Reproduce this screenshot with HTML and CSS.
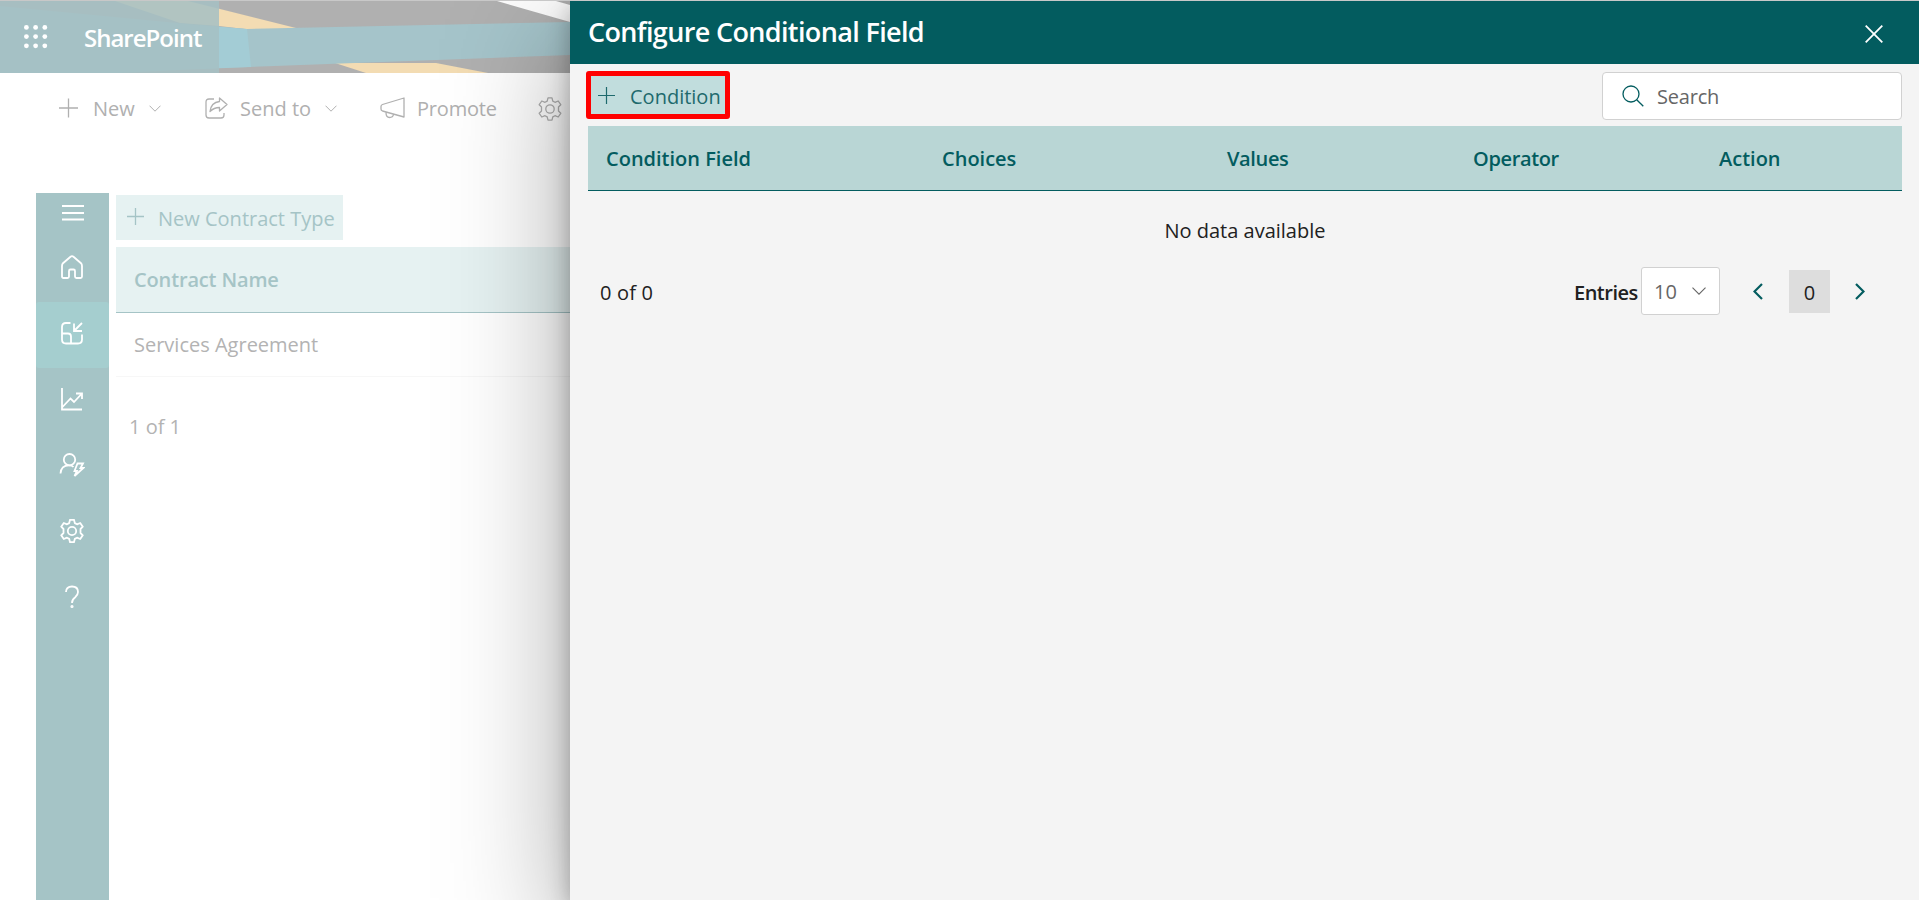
FILE: index.html
```
<!DOCTYPE html>
<html lang="en">
<head>
<meta charset="utf-8">
<title>Configure Conditional Field</title>
<link rel="stylesheet" href="styles.css">
</head>
<body>
<div class="page">
  <header class="suite">
    <svg class="suite-art" viewBox="0 0 570 72" preserveAspectRatio="none">
      <rect width="570" height="72" fill="#b0b0b0"/>
      <path d="M115 0H188L300 28H245L219 25L180 22Z" fill="#f3dcb3"/>
      <path d="M335 62H436L488 72H366Z" fill="#f3dcb3"/>
      <path d="M0 5L219 26L247 28L570 21V54L219 67L120 72H0Z" fill="#a5c4ca"/>
      <path d="M200 24L247 28L251 66L200 68Z" fill="#a3ccd5"/>
      <path d="M497 0H570V21Z" fill="#fdfdfd"/>
      <path d="M556 0H570V4Z" fill="#b0b0b0"/>
    </svg>
    <div class="brand">
      <svg class="waffle" width="24" height="24" viewBox="0 0 24 24" fill="#fff"><circle cx="2.400" cy="2.400" r="2.400"/><circle cx="11.600" cy="2.400" r="2.400"/><circle cx="20.800" cy="2.400" r="2.400"/><circle cx="2.400" cy="11.600" r="2.400"/><circle cx="11.600" cy="11.600" r="2.400"/><circle cx="20.800" cy="11.600" r="2.400"/><circle cx="2.400" cy="20.800" r="2.400"/><circle cx="11.600" cy="20.800" r="2.400"/><circle cx="20.800" cy="20.800" r="2.400"/></svg>
      <span class="brand-name">SharePoint</span>
    </div>
  </header>
  <nav class="commands">
    <span class="cmd cmd-new"><svg width="20" height="20" viewBox="0 0 20 20"><path d="M9.500 .5V19.500M0 10H19"/></svg><span class="t-new">New</span><svg class="chev" width="12" height="7" viewBox="0 0 12 7"><path d="M.5 .7L6 6.200L11.500 .7"/></svg></span>
    <span class="cmd cmd-send"><svg width="23" height="22" viewBox="0 0 23 22"><path d="M9 2H4Q1 2 1 5V18Q1 21 4 21H16Q19 21 19 18V16M14.500 1L22 7.500L14.500 14V10.500Q9 10.500 5 14.500Q6 5.500 14.500 4.500Z" stroke-linejoin="round"/></svg><span class="t-send">Send to</span><svg class="chev" width="12" height="7" viewBox="0 0 12 7"><path d="M.5 .7L6 6.200L11.500 .7"/></svg></span>
    <span class="cmd cmd-promote"><svg width="25" height="22" viewBox="0 0 25 22"><path d="M24 1V20L2.500 14Q1 13.500 1 12V9.500Q1 8 2.500 7.500ZM6 15.500Q6 20.500 9.500 20.500Q13 20.500 13.500 17.500" stroke-linejoin="round"/></svg><span class="t-promote">Promote</span></span>
    <svg class="gear" width="24" height="24" viewBox="0 0 24 24"><use href="#gear"/></svg>
  </nav>
  <div class="work">
    <aside class="rail">
      <div class="rail-menu"><svg width="22" height="16" viewBox="0 0 22 16"><path d="M0 1H22M0 8H22M0 14.500H22"/></svg></div>
      <div class="rail-item"><svg width="24" height="24" viewBox="0 0 24 24"><path d="M2 11Q2 9.300 3 8.200L10.500 1.700Q12 .5 13.500 1.700L21 8.200Q22 9.300 22 11V21.500Q22 23 20.500 23H16.500Q15 23 15 21.500V16Q15 14.500 13.500 14.500H10.500Q9 14.500 9 16V21.500Q9 23 7.500 23H3.500Q2 23 2 21.500Z"/></svg></div>
      <div class="rail-item on"><svg width="24" height="24" viewBox="0 0 24 24"><path d="M10.500 2H6Q2 2 2 6V18.500Q2 22.500 6 22.500H18Q22 22.500 22 18.500V13.500M2 12.500H8Q11 12.500 11 15.500V22.500M14 2.500V10H22M14 10L22 2"/></svg></div>
      <div class="rail-item"><svg width="24" height="24" viewBox="0 0 24 24"><path d="M2 1V22.500H22M2 20.500L10.500 11.500L14 15L21.500 7M16 6.500H22V12"/></svg></div>
      <div class="rail-item"><svg width="26" height="24" viewBox="0 0 26 24"><circle cx="10.500" cy="6.700" r="5.700"/><path d="M1.500 20.500Q2 12.500 10 12.400Q13 12.400 14.500 14M18.500 10.500H24L21.500 15H24.500L15.500 23L18 18H15.500Z"/></svg></div>
      <div class="rail-item"><svg width="24" height="24" viewBox="0 0 24 24"><g id="gear"><circle cx="12" cy="12" r="4.200"/><path d="M10 .8H14L14.800 4.100L17 5.300L20.200 4L22.800 7.700L20.500 10V14L22.800 16.300L20.200 20L17 18.700L14.800 19.900L14 23.200H10L9.200 19.900L7 18.700L3.800 20L1.200 16.300L3.500 14V10L1.200 7.700L3.800 4L7 5.300L9.200 4.100Z" stroke-linejoin="round"/></g></svg></div>
      <div class="rail-item"><svg width="14" height="24" viewBox="0 0 14 24"><path d="M1 7Q1 1.500 7 1.500Q13 1.500 13 7Q13 10 10 12.500Q7 14.500 7 18"/><circle cx="7" cy="21.500" r=".7"/></svg></div>
    </aside>
    <main class="list">
      <button class="new-type"><svg width="17" height="17" viewBox="0 0 17 17"><path d="M8.500 0V17M0 8.500H17"/></svg><span>New Contract Type</span></button>
      <div class="list-head"><span>Contract Name</span></div>
      <div class="list-row"><span>Services Agreement</span></div>
      <div class="list-count"><span>1 of 1</span></div>
    </main>
  </div>
</div>
<section class="panel">
  <header class="panel-head"><h1>Configure Conditional Field</h1><svg width="18" height="18" viewBox="0 0 18 18"><path d="M.7 .7L17.300 17.300M17.300 .7L.7 17.300"/></svg></header>
  <div class="panel-body">
    <div class="tools">
      <button class="add"><svg width="17" height="17" viewBox="0 0 17 17"><path d="M8.500 0V17M0 8.500H17"/></svg><span>Condition</span></button>
      <div class="search"><svg width="22" height="22" viewBox="0 0 22 22"><circle cx="9" cy="9" r="8"/><path d="M14.700 14.700L21.300 21.300"/></svg><span>Search</span></div>
    </div>
    <div class="grid-head"><span>Condition Field</span><span>Choices</span><span class="tight">Values</span><span class="tight">Operator</span><span>Action</span></div>
    <div class="empty"><span>No data available</span></div>
    <div class="pager">
      <span class="count">0 of 0</span>
      <span class="entries">Entries</span>
      <div class="select"><span>10</span><svg width="14" height="8" viewBox="0 0 14 8"><path d="M.5 .7L7 7.200L13.500 .7"/></svg></div>
      <svg class="prev" width="10" height="17" viewBox="0 0 10 17"><path d="M9 1L1.500 8.500L9 16"/></svg>
      <span class="current">0</span>
      <svg class="next" width="10" height="17" viewBox="0 0 10 17"><path d="M1 1L8.500 8.500L1 16"/></svg>
    </div>
  </div>
</section>
</body>
</html>
```
FILE: styles.css
```
* { box-sizing: border-box; }
body { margin: 0; height: 900px; overflow: hidden; position: relative; background: #fff; border-top: 1px solid #c8c8c8; font-family: "Open Sans", "Noto Sans", sans-serif; font-size: 20px; line-height: 28px; color: #212121; }
svg { display: block; flex: none; fill: none; stroke: currentColor; stroke-width: 1.3; }
span, h1 { white-space: nowrap; }
button { border: 0; padding: 0; margin: 0; font: inherit; color: inherit; display: flex; align-items: center; }
.page { height: 899px; display: flex; flex-direction: column; }
.suite { height: 72px; width: 100%; position: relative; background: #b0b0b0; }
.suite-art { position: absolute; left: 0; top: 0; width: 570px; height: 72px; stroke: none; }
.brand { position: relative; width: 219px; height: 72px; padding-left: 24px; display: flex; align-items: center; background: rgba(165,192,196,.86); }
.waffle { fill: #fff; stroke: none; }
.brand-name { margin-left: 36px; padding-top: 2px; color: #fff; font-weight: 600; font-size: 24px; letter-spacing: -1px; }
.commands { height: 70px; margin-bottom: 50px; padding-left: 59px; display: flex; align-items: center; color: #b0b0b0; }
.cmd { display: flex; align-items: center; }
.cmd-new { width: 146px; }
.cmd-send { width: 175px; }
.cmd-promote { width: 158px; }
.chev { stroke-width: 1; }
.gear { margin-top: 2px; }
.t-new { margin-left: 14px; padding-top: 2px; width: 56px; }
.t-send { margin-left: 12px; padding-top: 2px; width: 85px; }
.t-promote { margin-left: 12px; padding-top: 2px; letter-spacing: -.2px; }
.work { flex: 1; display: flex; }
.rail { width: 73px; margin-left: 36px; background: #a5c4c6; color: #fff; }
.rail svg { stroke-width: 1.8; }
.rail-menu { height: 43px; padding-top: 12px; display: flex; justify-content: center; }
.rail-item { height: 66px; padding: 0 1px 4px 0; display: flex; align-items: center; justify-content: center; }
.on { background: #a5cecf; border-radius: 3px; }
.list { flex: 1; padding: 2px 0 0 7px; color: #b3b3b3; }
.new-type { width: 227px; height: 45px; background: #e6f2f2; color: #a5c4c6; padding-left: 11px; }
.new-type span { margin-left: 14px; padding-top: 2px; }
.new-type svg { margin-bottom: 3px; }
.list-head { height: 66px; margin-top: 7px; padding-left: 18px; display: flex; align-items: center; background: #e6f2f2; border-bottom: 1px solid #a5c4c6; color: #a5c4c6; font-weight: 600; letter-spacing: -.15px; }
.list-row { height: 64px; padding-left: 18px; display: flex; align-items: center; border-bottom: 1px solid #f7f7f7; }
.list-count { padding: 36px 0 0 13px; }
.panel { position: absolute; left: 570px; top: 0; right: 0; height: 899px; background: #f4f4f4; box-shadow: 0 38px 115px rgba(0,0,0,.36), 0 7px 22px rgba(0,0,0,.28); }
.panel-head { height: 63px; padding: 0 36px 0 18px; display: flex; align-items: center; justify-content: space-between; background: #035c5f; color: #fff; }
.panel-head h1 { margin: -2px 0 0; font-size: 27px; font-weight: 600; line-height: 36px; letter-spacing: -.64px; }
.panel-head svg { margin-top: 2px; stroke-width: 1.8; }
.panel-body { padding: 7px 17px 0 16px; }
.tools { display: flex; justify-content: space-between; align-items: flex-start; height: 55px; }
.add { width: 144px; height: 48px; border: 5px solid #f00; border-radius: 3px; background: #c1dddd; color: #1e6a6d; padding-left: 7px; }
.add svg { stroke-width: 1.2; }
.add span { margin-left: 15px; padding-top: 3px; }
.search { margin-top: 1px; width: 300px; height: 48px; border: 1px solid #d1d1d1; border-radius: 4px; background: #fff; display: flex; align-items: center; padding-left: 19px; color: #035c5f; }
.search span { margin-left: 13px; padding-top: 2px; color: #666; letter-spacing: -.2px; }
.grid-head { margin-left: 2px; height: 65px; display: grid; grid-template-columns: 336px 285px 246px 246px 1fr; align-items: center; padding: 2px 0 0 18px; background: #b9d6d5; border-bottom: 1px solid #035c5f; color: #035c5f; font-weight: 600; }
.tight { letter-spacing: -.35px; }
.empty { margin-left: 2px; height: 78px; padding-top: 2px; display: flex; align-items: center; justify-content: center; }
.pager { height: 48px; margin-top: -2px; display: flex; align-items: center; }
.count { margin-left: 14px; padding-top: 3px; width: 974px; letter-spacing: .2px; }
.entries { font-weight: 600; padding-top: 3px; width: 67px; letter-spacing: -.5px; }
.select { width: 79px; height: 48px; border: 1px solid #d1d1d1; border-radius: 3px; background: #fff; color: #666; display: flex; align-items: center; padding-left: 12px; }
.select span { padding-top: 1px; }
.select svg { margin-left: 15px; stroke-width: 1.1; }
.prev, .next { color: #035c5f; stroke-width: 2.2; }
.prev { margin-left: 33px; }
.current { margin-left: 26px; padding-top: 3px; width: 41px; height: 43px; background: #ddd; display: flex; align-items: center; justify-content: center; }
.next { margin-left: 25px; }
```
